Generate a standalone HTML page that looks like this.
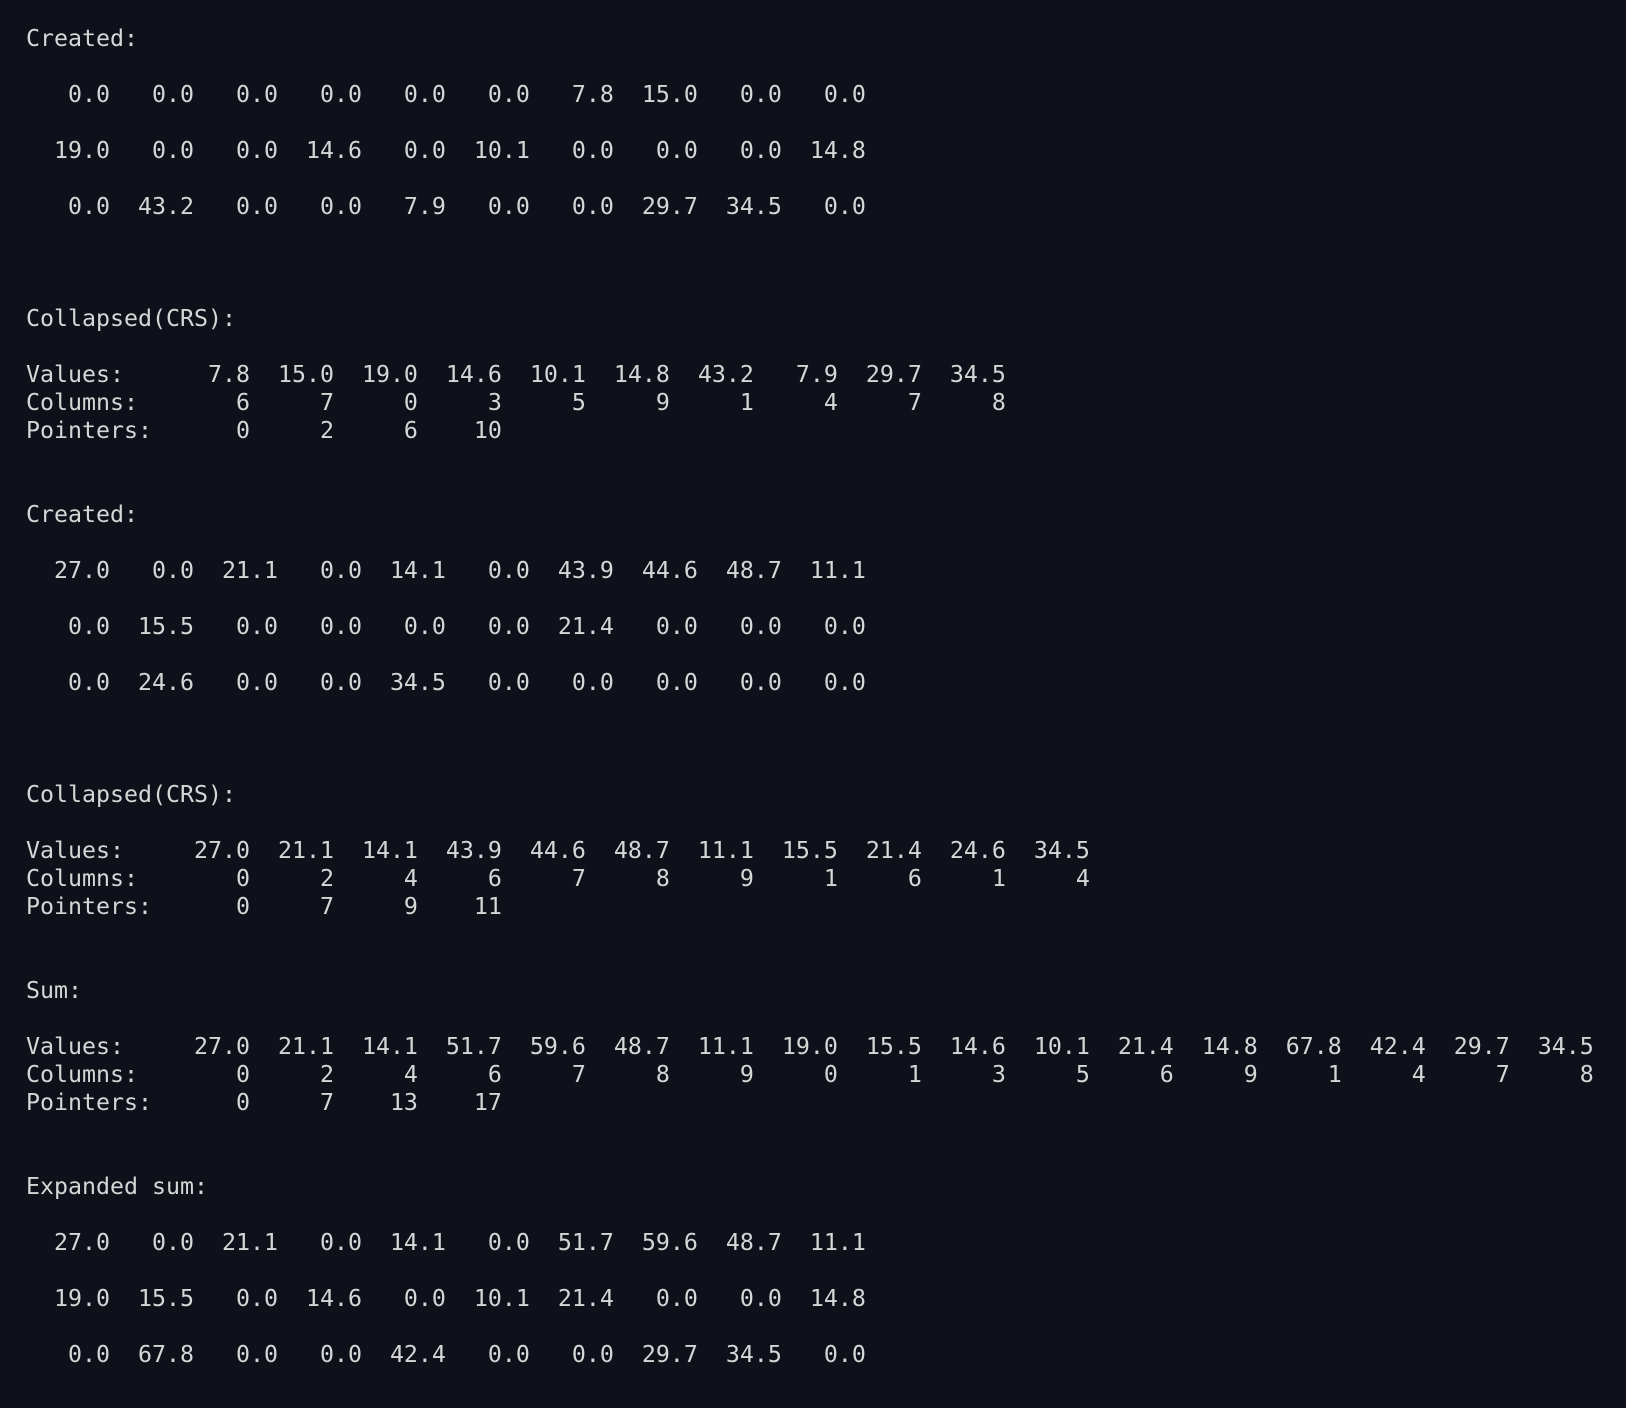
<!DOCTYPE html>
<html><head><meta charset="utf-8"><style>
html,body{margin:0;padding:0;background:#0e111a;width:1626px;height:1408px;overflow:hidden}
pre{margin:0;position:absolute;left:26px;top:25px;font-family:"DejaVu Sans Mono","Liberation Mono",monospace;font-size:23.25px;line-height:28px;color:#d6d6d6;white-space:pre}
</style></head><body><pre>Created:

   0.0   0.0   0.0   0.0   0.0   0.0   7.8  15.0   0.0   0.0

  19.0   0.0   0.0  14.6   0.0  10.1   0.0   0.0   0.0  14.8

   0.0  43.2   0.0   0.0   7.9   0.0   0.0  29.7  34.5   0.0



Collapsed(CRS):

Values:      7.8  15.0  19.0  14.6  10.1  14.8  43.2   7.9  29.7  34.5
Columns:       6     7     0     3     5     9     1     4     7     8
Pointers:      0     2     6    10


Created:

  27.0   0.0  21.1   0.0  14.1   0.0  43.9  44.6  48.7  11.1

   0.0  15.5   0.0   0.0   0.0   0.0  21.4   0.0   0.0   0.0

   0.0  24.6   0.0   0.0  34.5   0.0   0.0   0.0   0.0   0.0



Collapsed(CRS):

Values:     27.0  21.1  14.1  43.9  44.6  48.7  11.1  15.5  21.4  24.6  34.5
Columns:       0     2     4     6     7     8     9     1     6     1     4
Pointers:      0     7     9    11


Sum:

Values:     27.0  21.1  14.1  51.7  59.6  48.7  11.1  19.0  15.5  14.6  10.1  21.4  14.8  67.8  42.4  29.7  34.5
Columns:       0     2     4     6     7     8     9     0     1     3     5     6     9     1     4     7     8
Pointers:      0     7    13    17


Expanded sum:

  27.0   0.0  21.1   0.0  14.1   0.0  51.7  59.6  48.7  11.1

  19.0  15.5   0.0  14.6   0.0  10.1  21.4   0.0   0.0  14.8

   0.0  67.8   0.0   0.0  42.4   0.0   0.0  29.7  34.5   0.0
</pre></body></html>
